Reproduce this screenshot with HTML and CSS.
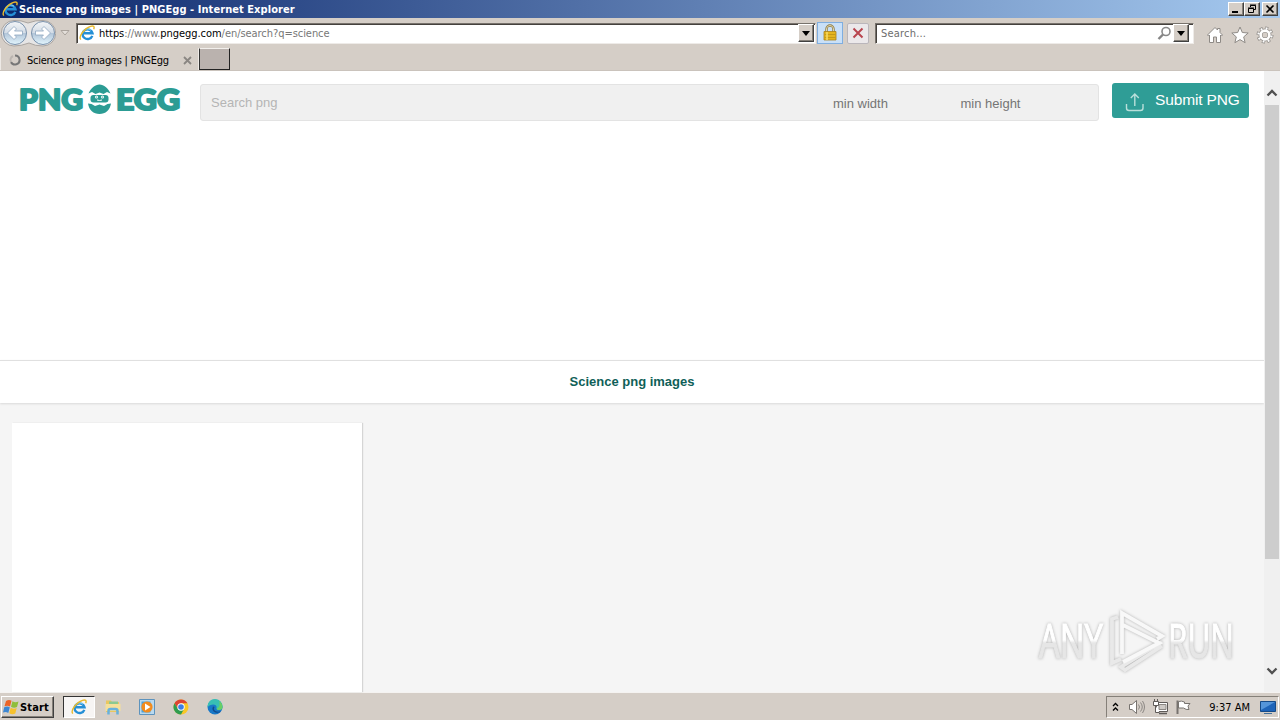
FILE: index.html
```html
<!DOCTYPE html>
<html lang="en">
<head>
  <meta charset="UTF-8">
  <title>Science png images | PNGEgg</title>
  <link rel="stylesheet" href="styles.css">
</head>
<body>
  <!-- shared icons -->
  <svg class="defs">
    <symbol id="ie" viewBox="0 0 16 16">
      <path d="M13.300 10.800A5 4.800 0 1 1 13.500 8.300H4.500" fill="none" stroke="#258fd6" stroke-width="2.400"/>
      <path d="M4.300 6.400A5 5 0 0 1 12 5.200" fill="none" stroke="#86d4f6" stroke-width="1"/>
      <path d="M1.800 14.600C-.8 11.500 5.500 3.200 11.500 1.300C14.500.3 15.800 1.500 14.700 4.300" fill="none" stroke="#e9b92c" stroke-width="1.400"/>
    </symbol>
    <symbol id="down" viewBox="0 0 8 5">
      <path d="M0 0h8L4 5z"/>
    </symbol>
  </svg>

  <div class="titlebar">
    <svg class="ie"><use href="#ie"/></svg>
    <span class="title">Science png images | PNGEgg - Internet Explorer</span>
    <div class="win-buttons">
      <button><svg width="12" height="10"><path d="M2 7h6v2H2z"/></svg></button>
      <button><svg width="12" height="10"><path d="M4.500 3V1.500h5v4H8M4 1h6" fill="none" stroke="#000"/><path d="M2.500 4.500h5v4h-5zM2 4h6" fill="none" stroke="#000"/></svg></button>
      <button class="close"><svg width="12" height="10"><path d="M2.500 1.500l7 7M9.500 1.500l-7 7" stroke="#000" stroke-width="1.600"/></svg></button>
    </div>
  </div>

  <div class="navbar">
    <svg class="arrows" width="56" height="28" viewBox="0 0 56 28">
      <defs>
        <linearGradient id="ball" x2="0" y2="1">
          <stop offset="0" stop-color="#f4f6f8"/>
          <stop offset=".48" stop-color="#d3dce6"/>
          <stop offset=".52" stop-color="#b3c6d9"/>
          <stop offset="1" stop-color="#e2f5fd"/>
        </linearGradient>
      </defs>
      <path d="M14 1.500Q21 1 28 4Q36 1 43 1.500A12.500 12.500 0 0 1 43 27Q35 27 29 24Q21 27 14 27A12.500 12.500 0 0 1 14 1.500z" fill="#e6e5e5" stroke="#aaa5a1"/>
      <circle cx="15" cy="14" r="11.500" fill="url(#ball)" stroke="#7b92ac"/>
      <circle cx="43" cy="14" r="11.500" fill="url(#ball)" stroke="#7b92ac"/>
      <path d="M7.500 14l6.500-6.500 2.500 2.500-2 2h8v4h-8l2 2-2.500 2.500z" fill="#fff" stroke="#8ea6bf" stroke-width=".8"/>
      <path d="M50.500 14l-6.500-6.500-2.500 2.500 2 2h-8v4h8l-2 2 2.500 2.500z" fill="#fff" stroke="#8ea6bf" stroke-width=".8"/>
    </svg>
    <svg class="history" width="10" height="6"><path d="M1 .5h8L5 5z" fill="#e4dfda" stroke="#aaa39c"/></svg>
    <div class="address">
      <svg class="ie"><use href="#ie"/></svg>
      <span class="url"><b>https</b>://www.<b>pngegg.com</b>/en/search?q=science</span>
      <button class="drop"><svg width="8" height="5"><use href="#down"/></svg></button>
    </div>
    <div class="lock">
      <svg width="16" height="18" viewBox="0 0 16 18">
        <path d="M4.500 9V5a3.500 3.500 0 0 1 7 0v4" fill="none" stroke="#8c7a45" stroke-width="2.400"/>
        <path d="M4.500 9V5a3.500 3.500 0 0 1 7 0v4" fill="none" stroke="#dfd5ab" stroke-width="1"/>
        <path d="M2 7.500h12v8.500H2z" fill="#e5b51f" stroke="#a9821c" stroke-width=".8"/>
        <path d="M2.500 10.500h11M2.500 13.500h11" stroke="#c59a18"/>
        <path d="M5 8v8" stroke="#f7dc67" stroke-width="1.500"/>
      </svg>
    </div>
    <div class="stop">
      <svg width="12" height="12"><path d="M1.500 1.500l9 9M10.500 1.500l-9 9" stroke="#b8454f" stroke-width="2"/></svg>
    </div>
    <div class="search">
      <span>Search...</span>
      <svg width="15" height="15"><circle cx="9" cy="5.500" r="4" fill="#fff" stroke="#8a8a8a" stroke-width="1.600"/><path d="M6 8.500L1.500 13" stroke="#858585" stroke-width="2.400"/></svg>
      <button class="drop"><svg width="8" height="5"><use href="#down"/></svg></button>
    </div>
    <div class="tools">
      <svg width="18" height="18"><path d="M1.500 9L9 1.500l2.500 2.500V2.500h2.500v4L16.500 9l-1 1-1-1v7.500h-4V11h-3v5.500h-4V9l-1 1z" fill="#fff" stroke="#8e8a86"/></svg>
      <svg width="18" height="18"><path d="M9 1l2.300 5.500 5.900.5-4.500 3.900 1.400 5.800L9 13.600l-5.100 3.100 1.400-5.800L.8 7l5.900-.5z" fill="#fff" stroke="#8e8a86"/></svg>
      <svg width="18" height="18">
        <circle cx="9" cy="9" r="7" fill="none" stroke="#8e8a86" stroke-width="3" stroke-dasharray="3 2.498"/>
        <circle cx="9" cy="9" r="4.500" fill="none" stroke="#8e8a86" stroke-width="4"/>
        <circle cx="9" cy="9" r="6.600" fill="none" stroke="#fff" stroke-width="2.200" stroke-dasharray="1.800 3.384" stroke-dashoffset="-.5"/>
        <circle cx="9" cy="9" r="4.400" fill="none" stroke="#fff" stroke-width="2.600"/>
      </svg>
    </div>
  </div>

  <div class="tabs">
    <div class="tab">
      <svg width="12" height="12"><path d="M6 1.500A4.500 4.500 0 1 1 2 8" fill="none" stroke="#777" stroke-width="2"/><path d="M2 8A4.500 4.500 0 0 1 4 2" fill="none" stroke="#bbb5b0" stroke-width="2"/></svg>
      <span>Science png images | PNGEgg</span>
      <svg class="tab-close" width="9" height="9"><path d="M1 1l7 7M8 1L1 8" stroke="#8a8682" stroke-width="1.800"/></svg>
    </div>
    <div class="new-tab"></div>
  </div>

  <div class="viewport">
    <div class="page">
      <header>
        <svg class="logo" width="164" height="38" viewBox="-1 -1 164 38">
          <g class="logo-text">
            <text x="0" y="26" textLength="64" lengthAdjust="spacingAndGlyphs">PNG</text>
            <text x="97" y="26" textLength="64" lengthAdjust="spacingAndGlyphs">EGG</text>
          </g>
          <path d="M69.500 9.500C72 4 76 .5 80.500 .5S89 4 91.500 9.500L88 8l-3.500 2-4-1.500-4 1.500-3.500-2z"/>
          <path d="M69 19.500l3.500.5 3.500 2 4.500-1.500L85 22l3.500-2 3.500-.5C91 26 86.500 30 80.500 30S70 26 69 19.500z"/>
          <rect x="71.500" y="11" width="18" height="7.500" rx="3"/>
          <circle cx="77.500" cy="13" r="1.500" fill="#fff"/>
          <circle cx="83.500" cy="13" r="1.500" fill="#fff"/>
          <circle cx="77.500" cy="13" r=".6"/>
          <circle cx="83.500" cy="13" r=".6"/>
          <path d="M78 16q2.500 1 5 0" fill="none" stroke="#fff"/>
        </svg>
        <div class="search-form">
          <span class="query">Search png</span>
          <span class="size">min width</span>
          <span class="size">min height</span>
        </div>
        <div class="submit">
          <svg width="20" height="20"><path d="M1.500 12v4a2.500 2.500 0 0 0 2.500 2.500h11.500a2.500 2.500 0 0 0 2.500-2.500v-4M9.800 14V2M5.800 6l4-4 4 4" fill="none" stroke="#b9dfda" stroke-width="1.400"/></svg>
          <span>Submit PNG</span>
        </div>
      </header>
      <h1>Science png images</h1>
      <div class="results">
        <div class="card"></div>
      </div>
    </div>
    <div class="scrollbar">
      <svg width="12" height="9"><path d="M1.500 7.500L6 3l4.500 4.500" fill="none" stroke="#505050" stroke-width="2.300"/></svg>
      <div class="thumb"></div>
      <svg class="scroll-down" width="12" height="9"><path d="M1.500 2.500L6 7l4.500-4.500" fill="none" stroke="#505050" stroke-width="2.300"/></svg>
    </div>

    <svg class="watermark" width="204" height="76" viewBox="0 -2 204 76">
      <defs>
        <linearGradient id="fade" gradientUnits="userSpaceOnUse" x1="0" y1="15" x2="0" y2="52">
          <stop offset=".46" stop-color="#fff"/>
          <stop offset=".54" stop-color="#e6e6e6"/>
        </linearGradient>
      </defs>
      <g class="mark-text" fill="url(#fade)" stroke="url(#fade)">
        <text x="3" y="50" textLength="64" lengthAdjust="spacingAndGlyphs">ANY</text>
        <text x="132" y="50" textLength="66" lengthAdjust="spacingAndGlyphs">RUN</text>
      </g>
      <g fill="none" stroke-width="3.800">
        <path d="M82 9l-6 2v44l9-4M126 34L85 59l4 3 37-24" stroke="#e9e9e9"/>
        <path d="M86 46V5l40 23-5 3M87 17l36 18-36 19" stroke="#f8f8f8"/>
      </g>
    </svg>
  </div>

  <div class="taskbar">
    <div class="start">
      <svg width="17" height="16" viewBox="0 0 17 16">
        <path d="M3 2q3-2 5.500-.2L7 7.500Q4.500 6 1.500 7.300z" fill="#ec6426"/>
        <path d="M9.500 2.200q2.800 1.800 6 .2L14 8q-3 1.500-6-.2z" fill="#8fbe3c"/>
        <path d="M1.200 8.300q3-1.500 5.600 0L5.300 14Q3 12.400 0 13.500z" fill="#3d87d2"/>
        <path d="M7.700 8.700q3 1.700 6 .3L12.300 14.500q-3 1.500-6-.2z" fill="#f6c12d"/>
      </svg>
      <span>Start</span>
    </div>
    <div class="task active"><svg class="ie"><use href="#ie"/></svg></div>
    <div class="task">
      <svg width="16" height="16">
        <path d="M1 1.500h5l1 1.500h7v10H1z" fill="#eac75f"/>
        <path d="M4 2.500h9v5H4z" fill="#8bc990"/>
        <path d="M.5 5h15v7H.5z" fill="#f5e09a"/>
        <path d="M3.500 15.500V12q0-2 2-2h5q2 0 2 2v3.500" fill="none" stroke="#68b1dc" stroke-width="2.500"/>
      </svg>
    </div>
    <div class="task">
      <svg width="16" height="16">
        <path d="M.5.500h15v15H.500z" fill="#b9d9ef" stroke="#5d93bd"/>
        <path d="M2.500 2.500h9v11h-9z" fill="#4d9fd5"/>
        <circle cx="8" cy="8" r="5.600" fill="#f28b1d"/>
        <path d="M6 4.500l5.500 3.500L6 11.500z" fill="#fff"/>
      </svg>
    </div>
    <div class="task">
      <svg width="16" height="16">
        <circle cx="8" cy="8" r="7.500" fill="#f9c726"/>
        <path d="M1.500 4.250A7.500 7.500 0 0 1 14.500 4.300H8L5 10z" fill="#dd4433"/>
        <path d="M1.500 4.250A7.500 7.500 0 0 0 8 15.500L11 10 5 10z" fill="#2f9c50"/>
        <circle cx="8" cy="8" r="3.700" fill="#fff"/>
        <circle cx="8" cy="8" r="2.800" fill="#3d7ee5"/>
      </svg>
    </div>
    <div class="task">
      <svg width="16" height="16">
        <circle cx="8" cy="8" r="7.500" fill="#1878c8"/>
        <path d="M.5 7A7.500 7.500 0 0 1 15.500 8q0 3-3.500 3-3 0-2.500-2Q10 5.500 6 5.500 2.500 5.500.5 8z" fill="#38bfb4"/>
        <path d="M12 2a7.500 7.500 0 0 1 3.500 6q0 3-3.500 3-2 0-2.500-1Q14 7 12 2z" fill="#69cf65"/>
        <path d="M6 7.500q-2 4 2.500 6 3 1.200 5.500-1.500-3 1.500-5.500 0T7.500 8z" fill="#114a8b"/>
      </svg>
    </div>
    <div class="tray">
      <svg width="7" height="10"><path d="M1 4l2.500-2.500L6 4M1 8.500L3.500 6 6 8.500" fill="none" stroke="#000" stroke-width="1.300"/></svg>
      <svg class="sound" width="18" height="16">
        <path d="M1.500 5.500H4L8.500 1.500v13L4 10.500H1.500z" fill="#fff" stroke="#77736f"/>
        <path d="M10.500 5.500q2 2.500 0 5M12.500 3.500q3.500 4.500 0 9M14.500 2q4 6 0 12" fill="none" stroke="#8b8783"/>
      </svg>
      <svg class="network" width="17" height="16">
        <path d="M4.500 3.500h11v9h-11z" fill="#fff" stroke="#5f5b58"/>
        <path d="M7 5.500h7v5H7z" fill="#cdc9c5" stroke="#8b8783"/>
        <path d="M7 14.500h8" stroke="#5f5b58" stroke-width="1.500"/>
        <path d="M1.500 2.500h5v4h-5zM2.500 0v2M5.500 0v2M3.500 6.500v7h4" fill="#fff" stroke="#5f5b58"/>
      </svg>
      <svg class="flag" width="17" height="16"><path d="M2.500 15V1.500" stroke="#77736f" stroke-width="2"/><path d="M3.500 2.500q3-1 6 .5v1.500h5.500L13 7l1 3.500q-3 .5-5.500-1.500h-5z" fill="#fff" stroke="#77736f"/></svg>
      <span class="clock">9:37 AM</span>
      <svg class="desktop" width="16" height="14"><path d="M.5.500h15v10H.500z" fill="#1f64b8" stroke="#164a87"/><path d="M1 1h14L1 9z" fill="#5595d9"/><path d="M4 12.500h8" stroke="#447099"/></svg>
    </div>
  </div>
</body>
</html>
```
FILE: styles.css
```css
* {
  box-sizing: border-box;
}

body {
  margin: 0;
  width: 1280px;
  height: 720px;
  overflow: hidden;
  display: flex;
  flex-direction: column;
  background: #d5cec7;
  font-family: "DejaVu Sans Condensed", "DejaVu Sans", sans-serif;
  font-size: 11px;
  color: #000;
}

svg {
  display: block;
  flex-shrink: 0;
}

span {
  white-space: nowrap;
}

button {
  padding: 0;
  display: flex;
  align-items: center;
  justify-content: center;
  background: #d5cec7;
  border: 1px solid;
  border-color: #fff #404040 #404040 #fff;
  box-shadow: inset -1px -1px #858079;
}

.defs {
  position: absolute;
  width: 0;
  height: 0;
}

.ie {
  width: 16px;
  height: 16px;
}

/* title bar */
.titlebar {
  height: 18px;
  padding: 0 2px;
  display: flex;
  align-items: center;
  background: linear-gradient(90deg, #0b266b, #a5c9ef);
}

.title {
  margin-left: 1px;
  color: #fff;
  font-weight: bold;
  letter-spacing: 0.06px;
}

.win-buttons {
  margin-left: auto;
  display: flex;
}

.win-buttons button {
  width: 16px;
  height: 14px;
}

.win-buttons .close {
  margin-left: 2px;
}

/* address row */
.navbar {
  height: 30px;
  display: flex;
  align-items: center;
}

.history {
  margin-left: 4px;
}

.address,
.search {
  height: 21px;
  display: flex;
  align-items: center;
  background: #fff;
  border: 1px solid;
  border-color: #77726c #eeebe8 #eeebe8 #77726c;
  box-shadow: inset 1px 1px #45413d;
}

.address {
  width: 740px;
  margin-left: 6px;
  padding: 0 1px 0 2px;
}

.url {
  margin-left: 4px;
  padding-top: 1px;
  color: #777;
  letter-spacing: -0.05px;
}

.url b {
  color: #000;
  font-weight: normal;
}

.drop {
  width: 16px;
  height: 18px;
  margin-left: auto;
}

.lock {
  width: 26px;
  height: 22px;
  margin-left: 1px;
  display: flex;
  align-items: center;
  justify-content: center;
  background: #c9e0f8;
  border: 1px solid #7faee0;
}

.stop {
  width: 22px;
  height: 21px;
  margin-left: 4px;
  display: flex;
  align-items: center;
  justify-content: center;
  background: #ebe8ea;
  border: 1px solid #bab6bb;
  border-radius: 2px;
}

.search {
  width: 319px;
  margin-left: 6px;
  padding: 0 4px 0 5px;
  color: #6d6d6d;
}

.search span {
  padding-top: 1px;
  letter-spacing: 0.2px;
}

.search svg:not(button svg) {
  margin-left: auto;
}

.search .drop {
  margin-left: 1px;
}

.tools {
  margin-left: 12px;
  display: flex;
  gap: 7px;
  padding-top: 3px;
}

/* tabs */
.tabs {
  height: 23px;
  display: flex;
  border-bottom: 1px solid #cac3bc;
}

.tab {
  width: 199px;
  padding: 2px 6px 0 8px;
  display: flex;
  align-items: center;
  border-left: 1px solid #eeeae6;
  border-right: 1px solid #eeeae6;
}

.tab span {
  margin-left: 6px;
  letter-spacing: -0.27px;
}

.tab-close {
  margin-left: auto;
}

.new-tab {
  width: 31px;
  height: 22px;
  background: #bab2ae;
  border: 1px solid;
  border-color: #f2efec #222 #222 #333;
}

/* web page */
.viewport {
  position: relative;
  height: 621px;
  display: flex;
  font-family: "Liberation Sans", Arial, sans-serif;
}

.page {
  width: 1264px;
  display: flex;
  flex-direction: column;
  background: #f5f5f5;
}

header {
  height: 289px;
  padding: 12px 15px 0 18px;
  display: flex;
  align-items: flex-start;
  background: #fff;
}

.logo {
  fill: #2c9c94;
}

.logo-text {
  font-family: Lato, sans-serif;
  font-weight: 900;
  font-size: 29px;
  stroke: #2c9c94;
  stroke-width: 2;
  stroke-linejoin: round;
}

.search-form {
  width: 899px;
  height: 37px;
  margin: 1px 0 0 18px;
  padding: 0 1px 0 10px;
  display: flex;
  align-items: center;
  background: #f0f0f0;
  border: 1px solid #e3e3e3;
  border-radius: 3px;
  font-size: 13px;
}

.query {
  flex: 1;
  color: #b5b5b5;
}

.size {
  width: 127.5px;
  padding-top: 2px;
  color: #757575;
}

.size:last-child {
  width: 136.5px;
}

.submit {
  width: 137px;
  height: 35px;
  margin-left: 13px;
  padding-left: 13px;
  display: flex;
  align-items: center;
  background: #2f9d96;
  border-radius: 3px;
  color: #fff;
  font-size: 15.5px;
}

.submit svg {
  margin-top: 2px;
}

.submit span {
  margin: -1px 0 0 10px;
  letter-spacing: -0.15px;
}

h1 {
  height: 43px;
  margin: 0;
  border-top: 1px solid #e0e0e0;
  background: #fff;
  box-shadow: 0 1px 2px #d9d9d9;
  color: #0f6058;
  font-size: 13px;
  line-height: 41px;
  text-align: center;
}

.results {
  flex: 1;
  padding: 20px 12px 0;
  display: flex;
}

.card {
  width: 350px;
  background: #fff;
  box-shadow: 1px 0 1px #d5d5d5;
}

.scrollbar {
  width: 16px;
  padding: 17px 0;
  display: flex;
  flex-direction: column;
  align-items: center;
  background: #f0f0f0;
}

.thumb {
  width: 14px;
  height: 454px;
  margin-top: 8px;
  background: #cdcdcd;
}

.scroll-down {
  margin-top: auto;
}

.watermark {
  position: absolute;
  left: 1036px;
  top: 535px;
  overflow: visible;
  filter: drop-shadow(0 0 1.5px #b0b0b0);
}

.mark-text {
  font-family: "Open Sans", sans-serif;
  font-size: 48px;
  stroke-width: 1.2;
}

/* taskbar */
.taskbar {
  height: 28px;
  padding: 2px 1px 1px;
  display: flex;
  align-items: center;
  border-top: 1px solid #f5f3f1;
}

.start {
  width: 53px;
  height: 22px;
  padding-left: 1px;
  display: flex;
  align-items: center;
  font-weight: bold;
  border: 1px solid;
  border-color: #fff #404040 #404040 #fff;
  box-shadow: inset -1px -1px #858079;
}

.start span {
  letter-spacing: 0.15px;
}

.task {
  width: 32px;
  height: 22px;
  margin-right: 2px;
  display: flex;
  align-items: center;
  justify-content: center;
}

.task.active {
  margin-left: 9px;
  background: #f7f5f4;
  border: 1px solid;
  border-color: #333 #fff #fff #333;
}

.tray {
  width: 173px;
  height: 22px;
  margin-left: auto;
  padding: 0 2px 0 5px;
  display: flex;
  align-items: center;
  border: 1px solid;
  border-color: #858079 #fff #fff #858079;
}

.sound {
  margin-left: 9px;
}

.network {
  margin-left: 6px;
}

.flag {
  margin-left: 6px;
}

.clock {
  margin-left: auto;
}

.desktop {
  margin: 2px 0 0 10px;
}
```
